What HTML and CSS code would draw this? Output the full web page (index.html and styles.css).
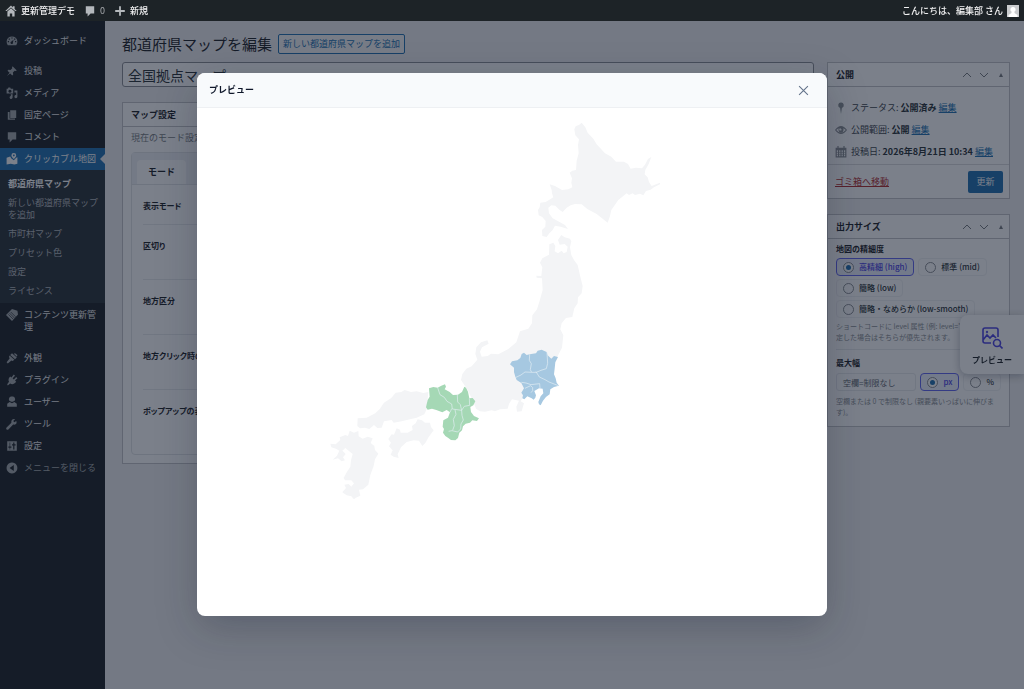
FILE: index.html
```html
<!DOCTYPE html>
<html lang="ja">
<head>
<meta charset="utf-8">
<meta name="viewport" content="width=device-width, initial-scale=1">
<title>都道府県マップを編集</title>
<link rel="stylesheet" href="styles.css">
</head>
<body>
<header class="topbar">
  <a href="#"><svg class="ico" viewBox="0 0 20 20"><path d="M10 1 0.500 10h2.500L10 4l7 6h2.500L16 6.500V2h-3v2zM10 5.500 4 11v8h4v-5h4v5h4v-8z"/></svg>更新管理デモ</a>
  <a href="#" class="count"><svg class="ico" viewBox="0 0 20 20"><path d="M3 2h14v12h-6l-5 5v-5H3z"/></svg>0</a>
  <a href="#"><svg class="ico" viewBox="0 0 20 20"><path d="M8.500 2h3v6.500H18v3h-6.500V18h-3v-6.500H2v-3h6.500z"/></svg>新規</a>
  <a href="#" class="account">こんにちは、編集部 さん<svg class="avatar" viewBox="0 0 12 12"><path fill="#c9cbce" d="M0 0h12v12H0z"/><path fill="#fff" d="M6 2a2.500 2.500 0 0 1 1.500 4.600V8l3 2v2h-9v-2l3-2V6.600A2.500 2.500 0 0 1 6 2z"/></svg></a>
</header>

<div class="shell">
  <nav class="sidebar">
    <ul class="menu">
      <li><a href="#"><svg class="ico" viewBox="0 0 20 20"><path fill-rule="evenodd" d="M3 17a9 9 0 1 1 14 0zM9 4v2h2V4zM4.500 6v2h2V6zm9 0v2h2V6zM3 10v2h2v-2zm12 0v2h2v-2zM12.500 8 9 11a2 2 0 1 0 2.500 1.500z"/></svg>ダッシュボード</a></li>
    </ul>
    <ul class="menu">
      <li><a href="#"><svg class="ico" viewBox="0 0 20 20"><path d="m11 2 7 7-2 1-1.500-.5-3 3 .5 3.500-1.500 1.500L7 14l-5.500 4.500L6 13 2.500 9.500 4 8l3.500.5 3-3L10 4z"/></svg>投稿</a></li>
      <li><a href="#"><svg class="ico" viewBox="0 0 20 20"><path fill-rule="evenodd" d="M1 3h2l1-2h3l1 2h4v8H1zm5.500 1.500a2.500 2.500 0 1 0 .1 0zM14 6h5v10a2.500 2.500 0 1 1-2-2.400V9h-3zM8 12h3v5a2.500 2.500 0 1 1-3-2z"/></svg>メディア</a></li>
      <li><a href="#"><svg class="ico" viewBox="0 0 20 20"><path d="M7 2h10v13H7zM3 5h3v11h9v2H3z"/></svg>固定ページ</a></li>
      <li><a href="#"><svg class="ico" viewBox="0 0 20 20"><path d="M3 2h14v12h-6l-5 5v-5H3z"/></svg>コメント</a></li>
      <li><a href="#" class="active" aria-current="page"><svg class="ico" viewBox="0 0 20 20"><path fill-rule="evenodd" d="M13 0a4 4 0 0 1 4 4c0 2-2 4-4 6-2-2-4-4-4-6a4 4 0 0 1 4-4zm0 2.500a1.500 1.500 0 1 0 .1 0zM1 8l6-2 2 3 4 3 4-4 2-1v11l-5 1-6-1-7 1z"/></svg>クリッカブル地図</a></li>
    </ul>
    <ul class="submenu">
      <li><a href="#" class="current">都道府県マップ</a></li>
      <li><a href="#">新しい都道府県マップを追加</a></li>
      <li><a href="#">市町村マップ</a></li>
      <li><a href="#">プリセット色</a></li>
      <li><a href="#">設定</a></li>
      <li><a href="#">ライセンス</a></li>
    </ul>
    <ul class="menu">
      <li><a href="#" class="tall"><svg class="ico" viewBox="0 0 20 20"><path d="M0 10 10 0l9 3 1 6L10 20z"/><path stroke="#1d2327" d="m4 9 8 8M6 7l8 8M8 5l8 8"/></svg>コンテンツ更新管理</a></li>
    </ul>
    <ul class="menu">
      <li><a href="#"><svg class="ico" viewBox="0 0 20 20"><path d="m10 2 8 7-3 3-8-7zM6 6l8 7-3 2-2-1-6 5-2-2 5-6-1-3zM15 2l4 3-1 3-5-5z"/></svg>外観</a></li>
      <li><a href="#"><svg class="ico" viewBox="0 0 20 20"><path d="m13 1 2 2-4 4 2 2 4-4 2 2-4 4 2 2c-3 4-7 5-10 3l-4 3-1-2 3-4C3 9 5 6 7 4l2 2z"/></svg>プラグイン</a></li>
      <li><a href="#"><svg class="ico" viewBox="0 0 20 20"><path d="M10 1a4 4 0 0 1 2 8c-1 1-3 1-4 0a4 4 0 0 1 2-8zM2 18v-5l4-3 4 2 4-2 4 3v5z"/></svg>ユーザー</a></li>
      <li><a href="#"><svg class="ico" viewBox="0 0 20 20"><path d="m17 5-3 2-2-2 3-3c-4-1-7 2-6 6l-8 8a2 2 0 0 0 3 3l8-8c4 1 7-2 5-6z"/></svg>ツール</a></li>
      <li><a href="#"><svg class="ico" viewBox="0 0 20 20"><path fill-rule="evenodd" d="M2 2h16v16H2zM6 4v7H4v2h2v3h1v-3h2v-2H7V4zm6 0v3h-2v2h2v7h2V9h2V7h-2V4z"/></svg>設定</a></li>
      <li><button type="button"><svg class="ico" viewBox="0 0 20 20"><path fill-rule="evenodd" d="M10 1a9 9 0 1 1-.1 0zM13 5v10l-7-5z"/></svg>メニューを閉じる</button></li>
    </ul>
  </nav>

  <main class="content">
    <div class="heading">
      <h1>都道府県マップを編集</h1>
      <a href="#" class="add">新しい都道府県マップを追加</a>
    </div>
    <div class="columns">
      <div class="primary">
        <input class="title" type="text" aria-label="タイトル" value="全国拠点マップ">
        <section class="box">
          <h2 class="boxhead">マップ設定</h2>
          <div class="settings">
            <p class="lead">現在のモード設定</p>
            <div class="panel">
              <div class="tabs"><button type="button" class="tab">モード</button></div>
              <ul class="fields">
                <li>表示モード</li>
                <li>区切り</li>
                <li>地方区分</li>
                <li>地方クリック時の動作</li>
                <li>ポップアップの表示</li>
              </ul>
            </div>
          </div>
        </section>
      </div>

      <aside class="secondary">
        <section class="box">
          <div class="boxhead"><h2>公開</h2>
            <button type="button" aria-label="上へ"><svg viewBox="0 0 10 10"><path d="m1 7 4-4 4 4"/></svg></button>
            <button type="button" aria-label="下へ"><svg viewBox="0 0 10 10"><path d="m1 3 4 4 4-4"/></svg></button>
            <button type="button" aria-label="閉じる"><svg viewBox="0 0 10 10"><path class="solid" d="m5 3 2 4H3z"/></svg></button>
          </div>
          <ul class="status">
            <li><svg class="ico" viewBox="0 0 20 20"><path d="M10 1a4.500 4.500 0 0 1 1.500 8.800L10 20 8.500 9.800A4.500 4.500 0 0 1 10 1z"/></svg><span>ステータス: <b>公開済み</b> <a href="#">編集</a></span></li>
            <li><svg class="ico" viewBox="0 0 20 20"><path fill-rule="evenodd" d="M0 10q10-13 20 0-10 13-20 0zm2 0q8 9 16 0-2-2-4-3 1 7-4 7t-4-7q-2 1-4 3zm7-3a2 2 0 1 0 2 2z"/></svg><span>公開範囲: <b>公開</b> <a href="#">編集</a></span></li>
            <li><svg class="ico" viewBox="0 0 20 20"><path fill-rule="evenodd" d="M1 3h3V0h2v3h8V0h2v3h3v16H1zm2 4v3h2V7zm4 0v3h2V7zm4 0v3h2V7zm4 0v3h2V7zM3 11v3h2v-3zm4 0v3h2v-3zm4 0v3h2v-3zm4 0v3h2v-3zM3 15v2h2v-2zm4 0v2h2v-2zm4 0v2h2v-2zm4 0v2h2v-2z"/></svg><span>投稿日: <b>2026年8月21日 10:34</b> <a href="#">編集</a></span></li>
          </ul>
          <div class="actions">
            <a href="#">ゴミ箱へ移動</a>
            <button type="button">更新</button>
          </div>
        </section>

        <section class="box">
          <div class="boxhead"><h2>出力サイズ</h2>
            <button type="button" aria-label="上へ"><svg viewBox="0 0 10 10"><path d="m1 7 4-4 4 4"/></svg></button>
            <button type="button" aria-label="下へ"><svg viewBox="0 0 10 10"><path d="m1 3 4 4 4-4"/></svg></button>
            <button type="button" aria-label="閉じる"><svg viewBox="0 0 10 10"><path class="solid" d="m5 3 2 4H3z"/></svg></button>
          </div>
          <div class="sizes">
            <h3>地図の精細度</h3>
            <div class="choices">
              <label class="pill"><input type="radio" name="level" checked>高精細 (high)</label>
              <label class="pill"><input type="radio" name="level">標準 (mid)</label>
              <label class="pill"><input type="radio" name="level">簡略 (low)</label>
              <label class="pill"><input type="radio" name="level">簡略・なめらか (low-smooth)</label>
            </div>
            <p class="help">ショートコードに level 属性 (例: level="low") を指定した場合はそちらが優先されます。</p>
            <hr>
            <h3>最大幅</h3>
            <div class="width">
              <input type="text" aria-label="最大幅" placeholder="空欄=制限なし">
              <label class="pill"><input type="radio" name="unit" checked>px</label>
              <label class="pill"><input type="radio" name="unit">%</label>
            </div>
            <p class="help">空欄または 0 で制限なし (親要素いっぱいに伸びます)。</p>
          </div>
        </section>
      </aside>
    </div>
  </main>
</div>

<button type="button" class="float">
  <svg viewBox="0 0 22 22"><path d="M10 16H4a2 2 0 0 1-2-2V3a2 2 0 0 1 2-2h11a2 2 0 0 1 2 2v7M2 13l4-5 3 3 3-3 3 3M18.500 18.500l3 3"/><circle cx="16" cy="16" r="3.500"/><circle cx="6" cy="5" r=".4"/></svg>
  プレビュー
</button>

<div class="overlay">
  <section class="modal" role="dialog" aria-modal="true" aria-labelledby="modal-title">
    <header class="modalhead">
      <h2 id="modal-title">プレビュー</h2>
      <button type="button" aria-label="閉じる"><svg viewBox="0 0 10 10"><path d="m1 1 8 8M9 1 1 9"/></svg></button>
    </header>
    <svg class="map" viewBox="197 108 630 508" role="img" aria-label="日本地図">
      <g class="land" transform="translate(500 110) scale(.3333)">
        <path d="M245 38 238 44 227 49 223 58 226 76 237 88 234 105 236 130 230 152 228 180 217 182 209 188 216 205 214 218 217 232 205 238 186 240 165 228 149 223 155 240 156 250 160 262 147 270 137 276 121 278 119 292 114 300 116 316 127 321 137 333 136 350 126 360 127 378 140 381 148 370 158 360 165 347 182 350 204 357 195 345 180 337 158 325 147 310 145 293 154 286 166 287 178 299 188 306 200 293 212 286 225 282 245 283 262 297 290 312 323 338 330 318 334 300 355 270 380 250 387 255 398 250 405 255 420 251 430 256 438 243 452 239 462 232 480 223 480 218 455 228 447 216 443 202 434 193 436 180 446 162 454 141 444 147 435 164 426 175 408 173 392 176 384 162 372 155 348 155 334 140 315 130 290 103 280 86 263 68 256 52Z"/>
      </g>
      <g class="land" transform="translate(440 230) scale(.3333)">
        <path d="M328 43 340 38 346 48 344 64 354 70 365 62 371 70 380 66 383 50 374 42 359 44 354 30 364 15 374 22 390 26 394 34 390 52 394 75 402 90 413 105 421 140 428 168 425 190 414 202 413 220 403 235 397 261 378 264 365 280 361 298 370 316 366 353 352 380 300 470 247 482 250 500 242 514 252 520 245 544 231 545 229 530 237 512 216 508 207 522 203 536 180 538 165 544 155 541 135 545 120 544 108 536 100 515 83 480 63 450 67 432 79 416 95 409 112 389 106 372 109 352 123 337 142 331 146 341 126 352 120 365 125 380 143 378 153 371 175 373 205 357 229 337 240 304 265 296 276 280 277 256 291 238 299 212 308 180 306 145 290 143 289 137 304 138 307 112 300 98 307 85 327 74Z"/>
        <path class="kanto" d="M210 403 216 394 232 391 241 384 245 372 252 368 260 375 269 373 288 370 293 362 305 359 320 366 323 376 334 386 342 378 354 381 346 397 344 416 342 433 347 445 350 458 357 467 342 471 331 478 329 493 318 501 309 512 302 526 297 523 295 516 302 499 310 490 308 476 297 475 283 483 288 496 286 503 281 509 275 505 262 499 253 508 247 505 249 496 244 488 252 475 244 459 230 450 226 440 222 426 222 413Z"/>
        <path class="border" d="m269 373-1 18 6 10-3 18 4 8 14 0 14-6 16-5 4-16-2-33M226 443l17-8 12-9 20 1M288 425l10 16 17 8 12 7 28 11M244 457l14 2 15 5 26-3 1 14M255 475l17-8 6 6 0 9-5 6"/>
      </g>
      <g class="land" transform="translate(310 370) scale(.3333)">
        <path d="M355 66 340 69 320 64 303 66 284 60 274 66 257 68 244 84 222 98 210 116 196 130 170 143 143 145 142 168 150 175 165 173 178 177 192 165 202 174 215 173 222 154 245 150 251 158 275 154 300 148 320 143 343 133 350 118ZM235 207 245 193 252 194 260 175 270 179 272 188 293 188 308 180 306 168 317 160 323 148 336 151 345 158 360 158 363 171 371 181 356 201 346 219 337 228 327 212 311 211 290 216 273 232 263 253 266 264 251 260 242 254 248 241 237 229 243 218ZM61 221 77 223 91 210 89 202 106 195 114 198 119 182 132 188 145 183 146 199 158 206 173 200 188 205 182 219 193 228 195 240 205 251 195 268 191 288 181 315 175 344 159 358 147 359 151 377 136 384 132 388 124 379 110 376 97 367 108 354 103 344 116 342 124 350 132 340 124 331 105 331 101 324 111 305 121 291 123 271 128 252 116 242 106 234 97 242 107 252 99 262 105 271 95 274 84 265 68 269 81 257 88 242 78 236 64 232Z"/>
        <path class="kansai" d="M357 55 370 51 383 53 394 47 405 43 408 50 404 58 419 66 429 75 444 74 456 66 463 50 468 53 474 65 478 85 488 84 496 94 490 106 481 111 483 126 492 138 507 145 501 153 487 151 480 158 467 161 459 169 456 181 448 188 444 204 436 211 423 210 415 204 406 198 399 188 402 177 398 170 400 151 414 143 420 127 410 120 397 127 379 120 366 116 353 119 348 112 353 90 359 80Z"/>
        <path class="border" d="m383 53 7 21 13 8 8 12 14 8 2 15 28 4M442 74l1 22 8 8 4 17 8-12 16-3-1-21M425 116l-5 11M435 119l3 14-8 15 3 19-5 14M455 121l1 15 4 14-7 12-1 15-9 9-17-4-10 2"/>
      </g>
    </svg>
  </section>
</div>
</body>
</html>
```
FILE: styles.css
```css
* { box-sizing: border-box; }
body {
  margin: 0;
  min-height: 100vh;
  background: #f0f0f1;
  color: #3c434a;
  font: 9px/12px "Noto Sans CJK JP", sans-serif;
}
h1, h2, h3, p, ul { margin: 0; padding: 0; }
ul { list-style: none; }
button, input { font: inherit; color: inherit; }
button { border: 0; padding: 0; background: none; }
a { color: #2271b1; }
.ico { width: 12px; height: 12px; flex: none; fill: currentColor; }

.topbar {
  position: fixed;
  inset: 0 0 auto;
  z-index: 3;
  display: flex;
  align-items: center;
  gap: 9px;
  height: 21px;
  padding: 0 5px;
  background: #1d2327;
}
.topbar a {
  display: flex;
  align-items: center;
  gap: 4px;
  color: #f0f0f1;
  font-weight: 500;
  text-decoration: none;
}
.topbar .ico { color: #b4b8bc; }
.topbar .count { color: #a7aaad; font-weight: 400; }
.topbar .account { margin-left: auto; }
.avatar { width: 12px; height: 12px; }

.shell { display: flex; min-height: 100vh; padding-top: 21px; }
.sidebar { flex: none; width: 105px; padding-top: 9px; background: #1d2327; }
.menu + .menu { margin-top: 8px; }
.menu a, .menu button {
  display: flex;
  align-items: center;
  gap: 6px;
  width: 100%;
  min-height: 22px;
  padding: 0 6px;
  color: #f0f0f1;
  text-align: left;
  text-decoration: none;
}
.menu a { position: relative; }
.menu .ico { color: #a7aaad; }
.menu button { color: #a7aaad; }
.menu .active { background: #2271b1; color: #fff; }
.menu .active .ico { color: #fff; }
.menu .active::after {
  content: "";
  position: absolute;
  right: 0;
  border: 5px solid transparent;
  border-right-color: #f0f0f1;
  border-left: 0;
}
.menu .tall { align-items: flex-start; padding: 6px; }
.submenu { padding: 5px 0 2px; background: #2c3338; }
.submenu a {
  display: block;
  padding: 3px 4px 4px 8px;
  color: #b4b9be;
  line-height: 12px;
  text-decoration: none;
}
.submenu .current { color: #fff; font-weight: 600; }

.content { flex: 1; min-width: 0; padding: 13px 14px 0 17px; }
.heading { display: flex; align-items: center; gap: 6px; height: 20px; margin-bottom: 8px; }
h1 { color: #1d2327; font-size: 15px; font-weight: 400; line-height: 20px; }
.add {
  padding: 3px 4px;
  border: 1px solid #2271b1;
  border-radius: 2px;
  background: #f6f7f7;
  text-decoration: none;
}
.columns {
  display: grid;
  grid-template-columns: minmax(0, 1fr) 183px;
  gap: 13px;
  align-items: start;
}
.primary, .secondary { display: grid; grid-template-columns: minmax(0, 1fr); gap: 15px; }
.title {
  width: 100%;
  height: 25px;
  padding: 0 5px;
  border: 1px solid #8c8f94;
  border-radius: 3px;
  background: #fff;
  color: #2c3338;
  font-size: 14px;
}
.box { border: 1px solid #c3c4c7; background: #fff; }
.boxhead {
  display: flex;
  align-items: center;
  gap: 7px;
  height: 24px;
  padding: 0 3px 0 8px;
  border-bottom: 1px solid #c3c4c7;
  color: #1d2327;
  font-size: 9px;
  font-weight: 600;
}
.boxhead h2 { flex: 1; font-size: 9px; font-weight: 600; }
.boxhead svg { display: block; width: 10px; height: 10px; fill: none; stroke: #787c82; }
.boxhead .solid { fill: #787c82; stroke: none; }

.settings { padding: 5px 8px 8px; }
.lead { margin-bottom: 8px; color: #787c82; }
.panel { border: 1px solid #e2e4e7; border-radius: 4px; }
.tabs { padding: 7px 5px 0; border-bottom: 1px solid #e2e4e7; background: #f0f2f5; }
.tab {
  display: block;
  height: 24px;
  padding: 0 11px;
  border-radius: 4px 4px 0 0;
  background: #fff;
  color: #1d2327;
  font-weight: 600;
}
.fields {
  padding: 0 11px;
  color: #1d2327;
  font-size: 8px;
  font-weight: 600;
  font-feature-settings: "palt";
}
.fields li { min-height: 55px; padding: 15px 0 11px; border-bottom: 1px solid #e8eaed; }
.fields li:first-child { min-height: 40px; }
.fields li:last-child { min-height: 64px; border: 0; }

.status { display: grid; gap: 10px; padding: 15px 7px 6px; }
.status li { display: flex; align-items: center; gap: 4px; }
.status .ico { color: #8c8f94; }
.status b { color: #2c3338; font-weight: 600; }
.actions {
  display: flex;
  align-items: center;
  justify-content: space-between;
  height: 34px;
  padding: 0 6px 0 7px;
  border-top: 1px solid #dcdcde;
}
.actions a { color: #b32d2e; }
.actions button {
  width: 35px;
  height: 22px;
  border-radius: 2px;
  background: #2271b1;
  color: #fff;
}

.sizes { padding: 4px 8px 8px; }
h3 { color: #1d2327; font-size: 8px; font-weight: 600; line-height: 12px; }
.choices { display: flex; flex-wrap: wrap; gap: 3px 4px; margin: 3px 0; }
.pill {
  display: flex;
  align-items: center;
  gap: 5px;
  height: 18px;
  padding: 0 6px;
  border: 1px solid #f0f1f3;
  border-radius: 4px;
  color: #2c3338;
  font-size: 8px;
  font-weight: 500;
}
.pill:has(:checked) { border-color: #6366f1; background: #eef2ff; color: #4f46e5; }
.pill input {
  appearance: none;
  display: grid;
  place-items: center;
  flex: none;
  width: 11px;
  height: 11px;
  margin: 0;
  border: 1px solid #8c8f94;
  border-radius: 50%;
  background: #fff;
}
.pill input:checked::before {
  content: "";
  width: 5px;
  height: 5px;
  border-radius: 50%;
  background: #2271b1;
}
.help { color: #8c8f94; font-size: 7px; line-height: 11px; }
hr { margin: 6px 0 7px; border: 0; border-top: 1px solid #e8eaed; }
.width { display: flex; gap: 4px; margin: 4px 0 5px; }
.width > input {
  flex: 1;
  min-width: 0;
  height: 18px;
  padding: 0 6px;
  border: 1px solid #e8eaed;
  border-radius: 3px;
  background: #fff;
  font-size: 8px;
}
.width > input::placeholder { color: #646970; }

.float {
  position: fixed;
  top: 315px;
  right: 0;
  display: grid;
  justify-items: center;
  gap: 5px;
  padding: 12px 12px 8px;
  border-radius: 8px 0 0 8px;
  background: #fff;
  box-shadow: 0 2px 10px rgba(15, 23, 42, .3);
  color: #1d2327;
  font-size: 8px;
  font-weight: 600;
}
.float svg { width: 22px; height: 22px; fill: none; stroke: #4f46e5; stroke-width: 1.6; }

.overlay {
  position: fixed;
  inset: 0;
  z-index: 2;
  display: flex;
  align-items: center;
  justify-content: center;
  padding: 24px;
  background: rgba(15, 23, 42, .55);
}
.modal {
  width: 100%;
  max-width: 630px;
  overflow: hidden;
  border-radius: 8px;
  background: #fff;
  box-shadow: 0 12px 40px rgba(15, 23, 42, .25);
}
.modalhead {
  display: flex;
  align-items: center;
  justify-content: space-between;
  height: 35px;
  padding: 0 18px 0 12px;
  border-bottom: 1px solid #eef0f3;
  background: #f8fafc;
}
.modalhead h2 { color: #0f172a; font-size: 9px; font-weight: 600; }
.modalhead svg { display: block; width: 11px; height: 11px; fill: none; stroke: #64748b; }
.map { display: block; width: 100%; }
.land { fill: #f3f4f6; }
.kanto { fill: #a6c8e1; }
.kansai { fill: #a5d8b5; }
.border { fill: none; stroke: #e4eff5; stroke-width: 2; stroke-linejoin: round; }
```
